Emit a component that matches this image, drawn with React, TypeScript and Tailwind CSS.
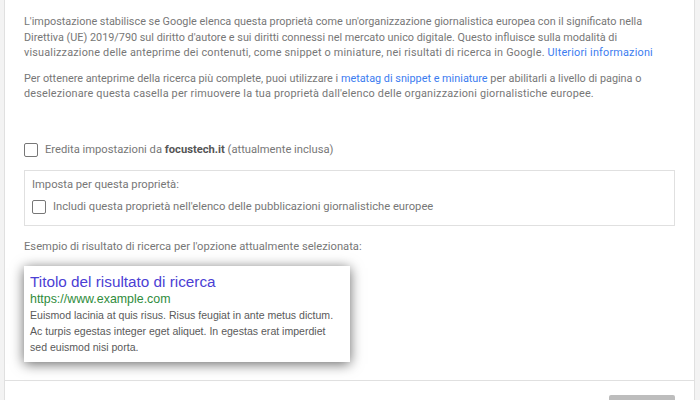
import React from 'react'

function Checkbox() {
  return <span className="inline-block w-[14px] h-[14px] shrink-0 rounded-[2px] border-[1.5px] border-[#777] bg-white" />
}

export default function App() {
  return (
    <div className="w-[700px] h-[400px] overflow-hidden bg-[#f3f3f3] pl-[4px] pr-[5px] font-['Roboto',sans-serif]">
      <div className="h-full bg-white border-x border-[#e0e0e0] flex flex-col">
        <div className="px-[19px] pt-[14px] text-[11.2px] leading-[15.6px] text-[#777] whitespace-nowrap">
          <div className="text-[10.85px]">
            <p>
              L&apos;impostazione stabilisce se Google elenca questa proprietà come un&apos;organizzazione giornalistica europea con il significato nella
              <br />
              Direttiva (UE) 2019/790 sul diritto d&apos;autore e sui diritti connessi nel mercato unico digitale. Questo influisce sulla modalità di
              <br />
              <span className="tracking-[0.2px]">
                visualizzazione delle anteprime dei contenuti, come snippet o miniature, nei risultati di ricerca in Google.{' '}
                <a className="text-[#3b7cf0]">Ulteriori informazioni</a>
              </span>
            </p>
            <p className="mt-[10px]">
              Per ottenere anteprime della ricerca più complete, puoi utilizzare i{' '}
              <a className="text-[#3b7cf0]">metatag di snippet e miniature</a> per abilitarli a livello di pagina o
              <br />
              <span className="tracking-[0.19px]">
                deselezionare questa casella per rimuovere la tua proprietà dall&apos;elenco delle organizzazioni giornalistiche europee.
              </span>
            </p>
          </div>

          <label className="mt-[40px] flex items-center gap-[7px] h-[16px]">
            <Checkbox />
            <span>
              Eredita impostazioni da <b className="font-bold text-[#555]">focustech.it</b> (attualmente inclusa)
            </span>
          </label>

          <div className="mt-[12px] border border-[#e0e0e0] px-[7px] pt-[6px] pb-[8px]">
            <p>Imposta per questa proprietà:</p>
            <label className="mt-[4px] flex items-center gap-[7px] h-[20px]">
              <Checkbox />
              <span>Includi questa proprietà nell&apos;elenco delle pubblicazioni giornalistiche europee</span>
            </label>
          </div>

          <p className="mt-[13px]">Esempio di risultato di ricerca per l&apos;opzione attualmente selezionata:</p>

          <div className="mt-[12px] w-[326px] bg-white px-[6px] pt-[7px] pb-[7px] shadow-[0_2px_12px_rgba(0,0,0,0.6)] font-['Liberation_Sans',Arial,sans-serif]">
            <p className="text-[15.3px] leading-[18px] text-[#4b40d4]">Titolo del risultato di ricerca</p>
            <p className="text-[12.4px] leading-[16px] text-[#2f8c3c]">https://www.example.com</p>
            <p className="text-[10.55px] leading-[16px] text-[#5a5a5a]">
              Euismod lacinia at quis risus. Risus feugiat in ante metus dictum.
              <br />
              Ac turpis egestas integer eget aliquet. In egestas erat imperdiet
              <br />
              sed euismod nisi porta.
            </p>
          </div>
        </div>

        <div className="mt-[18px] border-t border-[#e0e0e0] px-[19px] pt-[14px] flex justify-end">
          <button className="w-[66px] h-[30px] rounded-[2px] bg-[#bdbdbd]" />
        </div>
      </div>
    </div>
  )
}
